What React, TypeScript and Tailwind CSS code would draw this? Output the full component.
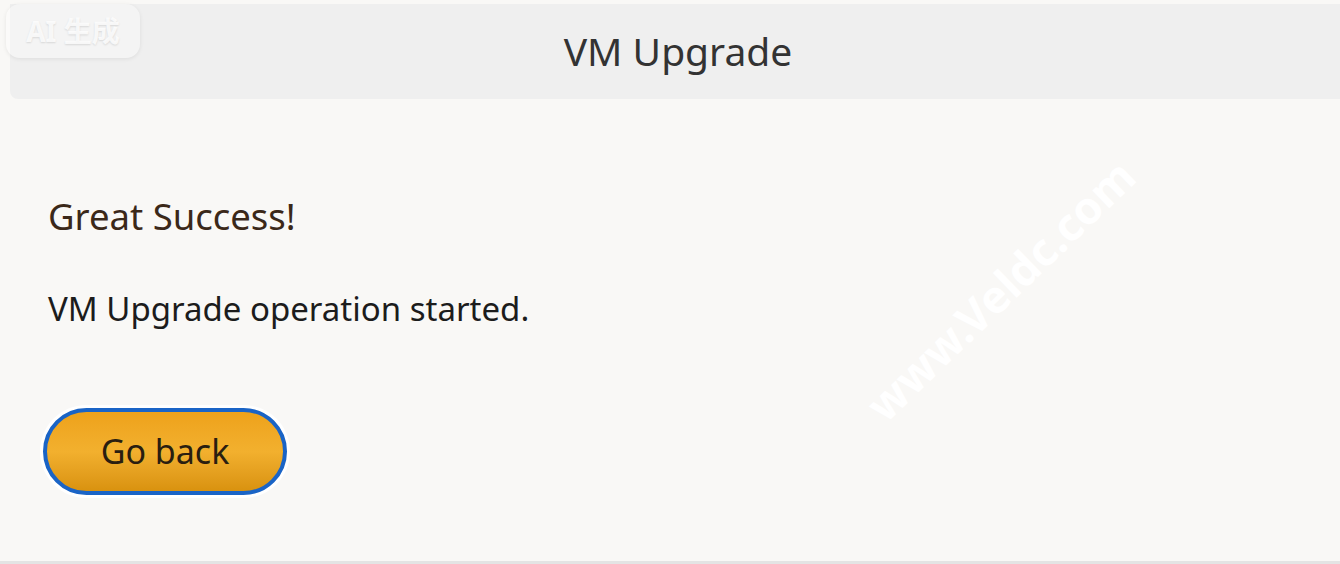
const font = { fontFamily: '"Noto Sans", "Open Sans", sans-serif' }

export default function App() {
    return (
        <div className="relative h-[564px] w-[1340px] overflow-hidden bg-[#f9f8f6]" style={font}>
            <div className="pt-[4px] pl-[10px]">
                <header className="flex h-[95px] items-center justify-center rounded-bl-[8px] bg-[#efefef]">
                    <h1 className="text-[39px] leading-none text-[#333333] -mt-[2px] ml-[6px]">VM Upgrade</h1>
                </header>
            </div>

            <main className="px-[48px] pt-[99px]">
                <h2 className="text-[36.5px] leading-none text-[#3b2819]">Great Success!</h2>
                <p className="mt-[57px] text-[33px] leading-none text-[#1c1c1c]">VM Upgrade operation started.</p>
                <button className="mt-[83px] -ml-[5px] flex h-[87px] w-[244px] items-center justify-center rounded-full border-[4px] border-[#1a64c6] bg-gradient-to-b from-[#eea21a] via-[#f2b02e] to-[#d9920e] text-[34px] text-[#2a1e10] shadow-[0_0_0_3px_#ffffff]">
                    Go back
                </button>
            </main>

            <div className="absolute bottom-0 left-0 h-[3px] w-full bg-[#e4e4e4]" />

            {/* watermarks */}
            <div className="absolute left-[6px] top-[4px] flex h-[54px] w-[134px] items-center justify-center rounded-[14px] bg-white/30 shadow-[0_1px_4px_rgba(0,0,0,0.08)]">
                <span className="text-[28px] font-bold text-white/80 [text-shadow:0_1px_2px_rgba(0,0,0,0.12)]" style={{ fontFamily: '"Noto Sans", "Noto Sans CJK SC", sans-serif' }}>AI 生成</span>
            </div>
            <div className="absolute left-[780px] top-[256px] w-[440px] -rotate-[44deg] text-center text-[45px] font-bold text-white">
                www.Veldc.com
            </div>
        </div>
    )
}
